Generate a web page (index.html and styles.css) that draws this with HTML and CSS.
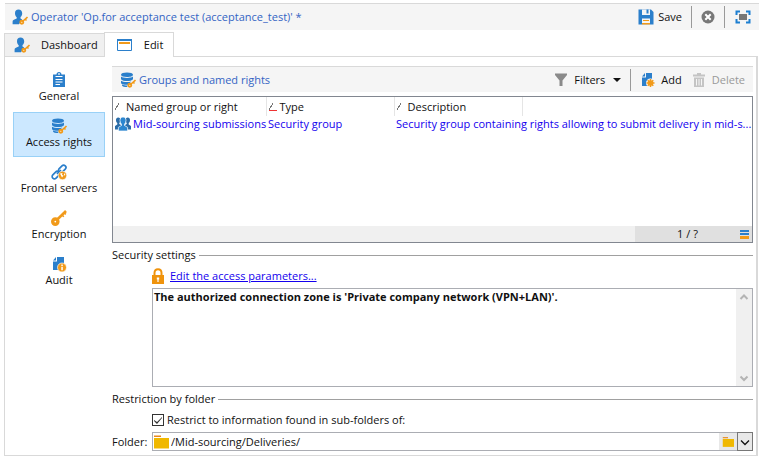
FILE: index.html
```html
<!DOCTYPE html>
<html lang="en">
<head>
<meta charset="utf-8">
<title>Operator</title>
<link rel="stylesheet" href="styles.css">
</head>
<body>
<svg class="sprite" aria-hidden="true">
  <symbol id="operator" viewBox="0 0 16 16">
    <path fill="#2b7fcb" d="M3 4.200C3 1.800 4.300.500 6.500.500s3.700 1.500 3.700 3.700c0 1.800-.7 3-1.700 3.900v1.500l1.700.9-1.700 2.500-1.500 2.300H.6v-2.600c0-1.300.8-1.800 2.400-2.400l1.700-.7V8.200C3.600 7.300 3 6 3 4.200z"/>
    <path fill="none" stroke="#f19a1a" stroke-width="1.600" d="M10.500 12.500 15.500 8M13.200 10.200l1.300 1.300"/>
    <circle cx="9.800" cy="13.300" r="1.500" fill="#fff" stroke="#f19a1a" stroke-width="1.900"/>
  </symbol>
  <symbol id="database" viewBox="0 0 16 16">
    <path fill="#2b7fcb" d="M1 2.800C1 1.300 3.600.500 7 .500s6 .8 6 2.300S10.400 5 7 5 1 4.300 1 2.800zM1 4.600C2.200 5.700 4.500 6 7 6s4.800-.3 6-1.400v2.600C12 8.500 9.700 9 7 9S2 8.500 1 7.200zM1 8.800C2.200 9.800 4.500 10 7 10c1.500 0 3-.1 4.200-.5L8.500 12.800H7c-3 0-5-.5-6-1.600zM2 12.500c1.500.8 3.500 1 5.500 1l-.4 1.500C4.500 15 2.500 14.500 2 13.500z"/>
    <path fill="none" stroke="#f19a1a" stroke-width="1.600" d="M10.500 12.500 15.500 8M13.200 10.200l1.300 1.300"/>
    <circle cx="9.800" cy="13.300" r="1.500" fill="#fff" stroke="#f19a1a" stroke-width="1.900"/>
  </symbol>
  <symbol id="window" viewBox="0 0 16 16">
    <path fill="#fff" stroke="#2b7fcb" d="M.500 2.500h14v11h-14z"/>
    <path fill="#2b7fcb" d="M0 2h15v2H0z"/>
    <path fill="#f19a1a" d="M2 5h11v2H2z"/>
  </symbol>
  <symbol id="clipboard" viewBox="0 0 16 16">
    <path fill="#2b7fcb" d="M2 2.500h3.500C5.500 1 6.500 0 8 0s2.500 1 2.500 2.500H14V15H2z"/>
    <path fill="#fff" d="M7.200 1.300h1.600v1.500H7.200zM4.500 4h7v1h-7zM4.500 7h7v1h-7zM4.500 9.500h7v1h-7zM4.500 12h4.500v1H4.500z"/>
  </symbol>
  <symbol id="chain" viewBox="0 0 16 16">
    <g fill="none" stroke="#2b7fcb" stroke-width="1.700">
      <rect x="7" y="2.600" width="8.500" height="4.600" rx="2.300" transform="rotate(-45 11.200 4.900)"/>
      <rect x=".6" y="8.800" width="8.500" height="4.600" rx="2.300" transform="rotate(-45 4.800 11.100)"/>
      <path d="m6 10 4-4"/>
    </g>
    <circle cx="11.500" cy="11.500" r="4.200" fill="#f19a1a" stroke="#fff" stroke-width=".6"/>
    <path fill="#fff" d="M9 9.500l2.500-.5-.5 2 1.500.5-1.500 2-1-2zM13 9l1.500 2-1.500.5z"/>
  </symbol>
  <symbol id="key" viewBox="0 0 16 16">
    <path fill="none" stroke="#f19a1a" stroke-width="2.600" d="M5.500 10.300 15 1"/>
    <path fill="none" stroke="#f19a1a" stroke-width="1.600" d="m11 5 1.800 1.800M13.200 2.800l1.600 1.600"/>
    <circle cx="4.300" cy="11.600" r="2.600" fill="#fff" stroke="#f19a1a" stroke-width="3.400"/>
  </symbol>
  <symbol id="audit" viewBox="0 0 16 16">
    <path fill="#2b7fcb" d="M6 1h7v13H2V5.500h4z"/>
    <path fill="#2b7fcb" d="M2 4.500 5 1v3.500z"/>
    <circle cx="11" cy="11.500" r="4.500" fill="#f19a1a" stroke="#fff" stroke-width=".7"/>
    <path fill="#fff" d="M10.300 8.600h1.500v1.300h-1.500zM10.300 10.700h1.500v3.500h-1.500z"/>
  </symbol>
  <symbol id="save" viewBox="0 0 16 16">
    <path fill="#2b7fcb" d="M.500.500H13L15.500 3v12.500H.500z"/>
    <path fill="#f5f5f5" d="M4 .500h8V6H4zM4 9.500h8v6H4z"/>
    <path fill="#2b7fcb" d="M8.500.500h2v4h-2z"/>
    <path fill="#f19a1a" d="M5 11h6v1H5zM4 14h8v1.500H4z"/>
  </symbol>
  <symbol id="cancel" viewBox="0 0 16 16">
    <circle cx="8" cy="8" r="6.500" fill="#777"/>
    <path stroke="#fff" stroke-width="2" d="m5.300 5.300 5.400 5.400m0-5.400-5.400 5.400"/>
  </symbol>
  <symbol id="fullscreen" viewBox="0 0 16 16">
    <path fill="none" stroke="#1d7fd1" stroke-width="2" d="M1.500 6V2.500H5M11 2.500h3.500V6M14.500 10v3.500H11M5 13.500H1.500V10"/>
    <path fill="#777" d="M4 5h8v6H4z"/>
  </symbol>
  <symbol id="funnel" viewBox="0 0 16 16">
    <path fill="#8a8a8a" d="M2 1.500h12v1.500L9.500 8.500V14h-3V8.500L2 3z"/>
  </symbol>
  <symbol id="add" viewBox="0 0 16 16">
    <path fill="#2b7fcb" d="M6 1h6v13H2V5.500h4z"/>
    <path fill="#2b7fcb" d="M2 4.500 5 1v3.500z"/>
    <circle cx="10.500" cy="11" r="4.500" fill="#f5f5f5"/>
    <path stroke="#f19a1a" stroke-width="1.500" d="M10.500 7v8M6.500 11h8M7.700 8.200l5.600 5.600M13.300 8.200l-5.600 5.600"/>
    <circle cx="10.500" cy="11" r="2.800" fill="#f19a1a"/>
  </symbol>
  <symbol id="trash" viewBox="0 0 16 16">
    <path fill="#c4c4c4" d="M2 2.500h4V1h4v1.500h4v2H2zM3 5.500h10v9.500H3z"/>
    <path stroke="#f5f5f5" d="M5.500 7v6.500M8 7v6.500M10.500 7v6.500"/>
  </symbol>
  <symbol id="group" viewBox="0 0 16 16">
    <path fill="#2a6ca8" d="M1 4c0-1.800.8-2.600 2.200-2.600S5.500 2.200 5.500 4 4.800 6.500 4.300 7v1L6 9v4.500H0V10l2.300-1.500V7C1.500 6.500 1 5.500 1 4zM15 4c0-1.800-.8-2.600-2.200-2.600S10.500 2.200 10.500 4s.7 2.500 1.200 3v1L10 9v4.500h6V10l-2.300-1.500V7C14.500 6.500 15 5.500 15 4z"/>
    <path fill="#2b86d0" stroke="#fff" stroke-width=".7" d="M5 4.500C5 2.400 6 1 8 1s3 1.400 3 3.500c0 1.700-.7 2.900-1.400 3.600v1.500l3 1.700V15H3.400v-3.700l3-1.700V8.100C5.700 7.400 5 6.200 5 4.500z"/>
  </symbol>
  <symbol id="lock" viewBox="0 0 16 16">
    <path fill="none" stroke="#ef930c" stroke-width="2" d="M4.500 8V5c0-2.300 1.300-3.700 3.500-3.700s3.500 1.400 3.500 3.700v3"/>
    <path fill="#ef930c" d="M2 7h12v9H2z"/>
    <path fill="#fff" d="M6.800 9.500h2.400v2h-.6V14H7.400v-2.500h-.6z"/>
  </symbol>
  <symbol id="folder" viewBox="0 0 16 16">
    <path fill="#e8891a" d="M1 1.500h7v1.500H1z"/>
    <path fill="#f0b800" d="M1 4h15v10.500H1z"/>
  </symbol>
  <symbol id="up" viewBox="0 0 16 16"><path fill="none" stroke="currentColor" stroke-width="2" d="m4.500 10 3.500-3.500 3.500 3.500"/></symbol>
  <symbol id="down" viewBox="0 0 16 16"><path fill="none" stroke="currentColor" stroke-width="2" d="m4.500 6.500 3.500 3.500 3.500-3.500"/></symbol>
  <symbol id="chevron" viewBox="0 0 12 12"><path fill="none" stroke="currentColor" stroke-width="1.300" d="m2 4.500 4 4 4-4"/></symbol>
</svg>

<header class="titlebar">
  <svg class="icon"><use href="#operator"/></svg>
  <h1 class="heading">Operator 'Op.for acceptance test (acceptance_test)' *</h1>
  <div class="actions">
    <button class="tool"><svg class="icon"><use href="#save"/></svg>Save</button>
    <span class="divider"></span>
    <button class="tool square" aria-label="Cancel"><svg class="icon"><use href="#cancel"/></svg></button>
    <span class="divider"></span>
    <button class="tool square" aria-label="Full screen"><svg class="icon"><use href="#fullscreen"/></svg></button>
  </div>
</header>

<nav class="tabs">
  <button class="tab"><svg class="icon"><use href="#operator"/></svg>Dashboard</button>
  <button class="tab current"><svg class="icon"><use href="#window"/></svg>Edit</button>
</nav>

<main class="panel">
  <nav class="sidebar">
    <button class="side"><svg class="icon"><use href="#clipboard"/></svg>General</button>
    <button class="side selected"><svg class="icon"><use href="#database"/></svg>Access rights</button>
    <button class="side"><svg class="icon"><use href="#chain"/></svg>Frontal servers</button>
    <button class="side"><svg class="icon"><use href="#key"/></svg>Encryption</button>
    <button class="side"><svg class="icon"><use href="#audit"/></svg>Audit</button>
  </nav>

  <div class="content">
    <div class="toolbar">
      <svg class="icon"><use href="#database"/></svg>
      <h2 class="heading">Groups and named rights</h2>
      <div class="actions">
        <button class="tool">
          <svg class="icon"><use href="#funnel"/></svg>Filters<span class="caret"></span>
        </button>
        <span class="divider"></span>
        <button class="tool"><svg class="icon"><use href="#add"/></svg>Add</button>
        <button class="tool" disabled><svg class="icon"><use href="#trash"/></svg>Delete</button>
      </div>
    </div>

    <div class="list">
      <table class="rights">
        <colgroup><col class="col-name"><col class="col"><col class="col"><col></colgroup>
        <thead>
          <tr>
            <th><span class="sort"></span>Named group or right</th>
            <th><span class="sort sorted"></span>Type</th>
            <th><span class="sort"></span>Description</th>
            <td></td>
          </tr>
        </thead>
        <tbody>
          <tr>
            <td><div class="name"><svg class="icon"><use href="#group"/></svg>Mid-sourcing submissions</div></td>
            <td>Security group</td>
            <td colspan="2">Security group containing rights allowing to submit delivery in mid-s...</td>
          </tr>
        </tbody>
      </table>
      <div class="status">
        <div class="count"><span class="pages">1 / ?</span><span class="bars"></span></div>
      </div>
    </div>

    <section class="group">
      <h3 class="legend">Security settings</h3>
      <div class="indent link-row">
        <svg class="icon"><use href="#lock"/></svg>
        <a class="link" href="#">Edit the access parameters...</a>
      </div>
      <div class="indent memo">
        <textarea class="memo-text" aria-label="Access parameters" readonly>The authorized connection zone is 'Private company network (VPN+LAN)'.</textarea>
        <div class="scroll">
          <svg class="icon"><use href="#up"/></svg>
          <svg class="icon"><use href="#down"/></svg>
        </div>
      </div>
    </section>

    <section class="group">
      <h3 class="legend">Restriction by folder</h3>
      <label class="indent check-row"><input class="check" type="checkbox" checked>Restrict to information found in sub-folders of:</label>
      <div class="folder-row">
        <label class="folder-label" for="folder-path">Folder:</label>
        <div class="field">
          <svg class="icon"><use href="#folder"/></svg>
          <input class="path" id="folder-path" type="text" value="/Mid-sourcing/Deliveries/">
          <button class="pick" aria-label="Choose folder"><svg class="icon small"><use href="#folder"/></svg></button>
          <button class="pick drop" aria-label="Recent folders"><svg class="icon small"><use href="#chevron"/></svg></button>
        </div>
      </div>
    </section>
  </div>
</main>
</body>
</html>
```

FILE: styles.css
```css
* { box-sizing: border-box; }

body {
  margin: 0;
  padding: 3px 1px 0 4px;
  background: #fff;
  color: #111;
  font: 11px/16px "Open Sans", "Noto Sans", sans-serif;
}

button, input, textarea { font: inherit; color: inherit; margin: 0; padding: 0; border: 0; background: none; }
h1, h2, h3 { margin: 0; font: inherit; }

.sprite { position: absolute; width: 0; height: 0; }
.icon { flex: none; display: block; width: 16px; height: 16px; }
.icon.small { width: 12px; height: 12px; }

.titlebar, .toolbar {
  display: flex;
  align-items: center;
  height: 27px;
  background: #f5f5f5;
  border-top: 1px solid #d9d9d9;
  padding: 0 8px;
}
.titlebar { margin: 0 -1px 0 1px; padding-left: 7px; }
.heading { margin-left: 3px; color: #3464c4; white-space: nowrap; }
.actions { display: flex; align-items: center; margin-left: auto; }
.tool { display: flex; align-items: center; gap: 4px; white-space: nowrap; }
.tool:disabled { color: #999; }
.square { width: 32px; justify-content: center; }
.titlebar .divider { margin-left: 9px; }
.titlebar .square + .divider { margin-left: 0; }
.titlebar .square:last-child { width: 26px; justify-content: flex-end; }
.divider { width: 1px; height: 22px; background: #999; }

.tabs { display: flex; align-items: flex-end; margin-top: 2px; }
.tab {
  display: flex;
  align-items: center;
  gap: 11px;
  height: 23px;
  padding: 0 6px 0 9px;
  background: #f0f0f0;
  border: 1px solid #d9d9d9;
  border-bottom: 0;
  border-right: 0;
}
.current {
  z-index: 1;
  height: 25px;
  margin-bottom: -1px;
  padding: 0 10px 0 12px;
  background: #fff;
  border-right: 1px solid #d9d9d9;
}

.panel {
  display: flex;
  gap: 7px;
  padding: 9px 3px 4px 8px;
  border: 1px solid #d9d9d9;
  border-right-width: 2px;
}

.sidebar { flex: none; display: flex; flex-direction: column; gap: 1px; width: 92px; }
.side {
  display: flex;
  flex-direction: column;
  align-items: center;
  height: 45px;
  padding-top: 5px;
  border: 1px solid transparent;
  white-space: nowrap;
}
.selected { background: #cce8ff; border-color: #99d1f7; }

.content { flex: 1; min-width: 0; }
.toolbar { height: 26px; }
.toolbar .actions { gap: 9px; }
.toolbar .tool { gap: 5px; }
.caret { margin-left: 3px; border: 4px solid transparent; border-top-color: #111; border-bottom: 0; }

.list { margin-top: 4px; border: 1px solid #828790; display: flex; flex-direction: column; height: 147px; }
.rights { width: 100%; table-layout: fixed; border-collapse: collapse; }
.col-name { width: 153px; }
.col { width: 128px; }
.rights th, .rights td {
  height: 16px;
  padding: 0 2px;
  font-weight: 400;
  line-height: 16px;
  text-align: left;
  white-space: nowrap;
}
.rights th { height: 19px; border-right: 1px solid #e5e5e5; }
.rights tbody { color: #1400ee; }
.rights tbody td:first-child { padding: 0 0 0 2px; }
.name { display: flex; align-items: center; gap: 2px; }
.sort {
  display: inline-block;
  width: 8px;
  height: 8px;
  margin-right: 3px;
  background: linear-gradient(120deg, transparent 1px, transparent 3px, #777 3px, #777 4px, transparent 4px);
}
.sorted { border-bottom: 1px solid #e33; }

.status { display: flex; justify-content: flex-end; height: 16px; margin-top: auto; background: #f0f0f0; }
.count { display: flex; align-items: center; width: 117px; padding-right: 3px; background: #e0e0e0; }
.pages { flex: 1; text-align: center; }
.bars {
  width: 9px;
  height: 9px;
  background: linear-gradient(#2b7fcb 2px, transparent 2px 3px, #2b7fcb 3px 5px, transparent 5px 6px, #f19a1a 6px);
}

.group { margin-top: 4px; }
.legend { display: flex; align-items: center; gap: 3px; }
.legend::after { content: ""; flex: 1; height: 1px; background: #a0a0a0; }
.indent { margin-left: 40px; }
.link-row { display: flex; align-items: center; gap: 4px; margin: 5px 0 4px 38px; }
.link { color: #1400ee; }
.memo { display: flex; height: 99px; border: 1px solid #abadb3; }
.memo-text { flex: 1; min-width: 0; padding-left: 1px; font-weight: 700; resize: none; outline: 0; }
.scroll {
  display: flex;
  flex-direction: column;
  justify-content: space-between;
  width: 16px;
  background: #f0f0f0;
  color: #b4b4b4;
}

.check-row { display: flex; align-items: center; gap: 3px; margin-top: 5px; }
.check {
  appearance: none;
  width: 12px;
  height: 12px;
  border: 1px solid #333;
}
.check:checked::before {
  content: "";
  display: block;
  height: 10px;
  background: #333;
  clip-path: polygon(1px 5px, 4px 7px, 9px 2px, 9px 3px, 4px 9px, 1px 6px);
}
.folder-row { display: flex; align-items: center; margin-top: 4px; }
.folder-label { width: 40px; }
.field { flex: 1; display: flex; align-items: center; height: 19px; min-width: 0; border: 1px solid #abadb3; }
.path { flex: 1; min-width: 0; padding-left: 2px; outline: 0; }
.pick { display: flex; align-items: center; justify-content: center; width: 18px; height: 17px; background: #e8e8e8; }
.drop { width: 16px; height: 19px; margin-right: -1px; border: 1px solid #777; }
```
